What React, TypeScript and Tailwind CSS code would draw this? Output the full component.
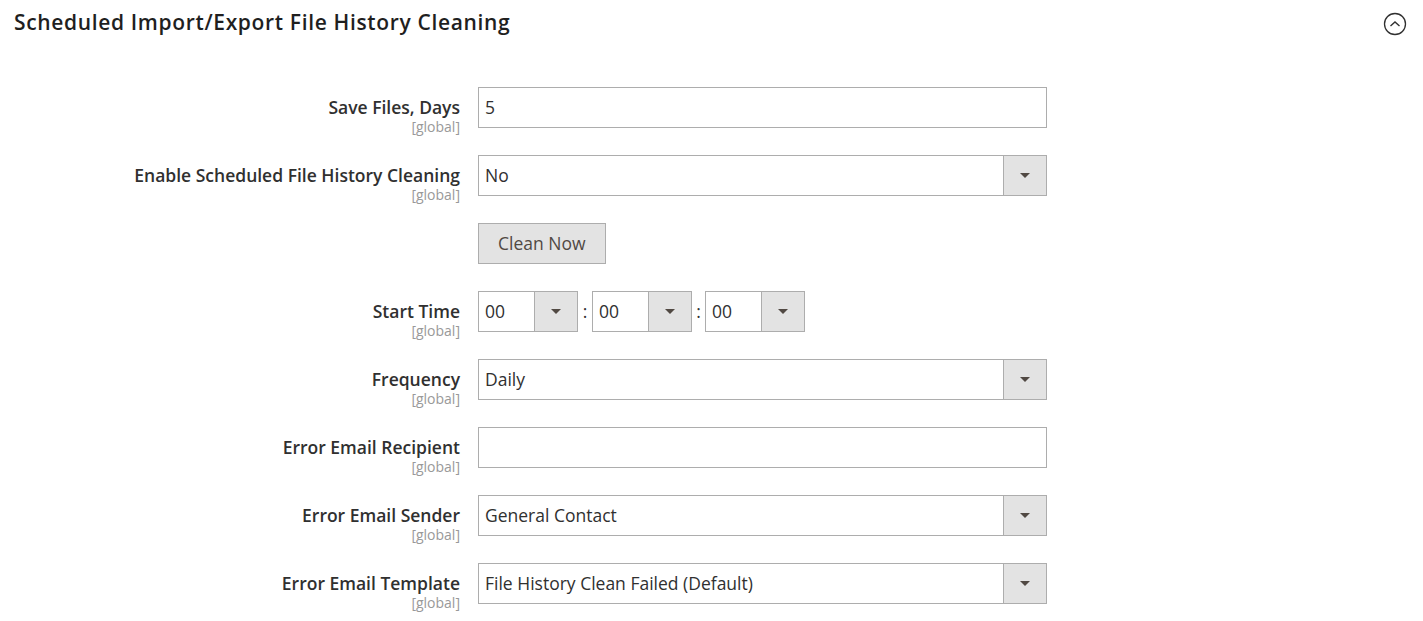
import React from "react";

const font = "font-['Open_Sans',_'Liberation_Sans',_sans-serif]";

function Arrow() {
  return (
    <div className="w-[43px] h-full bg-[#e3e3e3] border-l border-[#adadad] flex items-center justify-center shrink-0">
      <div className="w-0 h-0 border-l-[5px] border-r-[5px] border-t-[5px] border-l-transparent border-r-transparent border-t-[#514943]" />
    </div>
  );
}

function Select({ value, className = "" }: { value: string; className?: string }) {
  return (
    <div className={`h-[41px] border border-[#adadad] bg-white flex items-stretch ${className}`}>
      <div className="flex-1 flex items-center pl-[6px] text-[17.5px] text-[#303030]">{value}</div>
      <Arrow />
    </div>
  );
}

function Label({ text }: { text: string }) {
  return (
    <div className="w-[478px] shrink-0 pr-[18px] flex flex-col items-end pt-[10px]">
      <div className="text-[17.5px] leading-[20px] font-semibold text-[#303030]">{text}</div>
      <div className="text-[14px] leading-[20px] text-[#999999]">[global]</div>
    </div>
  );
}

function Row({ label, children }: { label: string; children: React.ReactNode }) {
  return (
    <div className="flex items-start h-[41px]">
      <Label text={label} />
      {children}
    </div>
  );
}

export default function App() {
  return (
    <div className={`w-[1423px] h-[621px] bg-white overflow-hidden ${font}`}>
      <div className="flex items-center justify-between h-[46px] pl-[14px] pr-[16px]">
        <h1 className="text-[21px] font-semibold text-[#1f1f1f] tracking-[0.65px]">
          Scheduled Import/Export File History Cleaning
        </h1>
        <svg width="24" height="24" viewBox="0 0 24 24" className="mt-[2px]">
          <circle cx="12" cy="12" r="10.5" fill="none" stroke="#303030" strokeWidth="1.3" />
          <path d="M7.5 14 L12 10 L16.5 14" fill="none" stroke="#303030" strokeWidth="1.4" />
        </svg>
      </div>
      <div className="flex flex-col gap-[27px] mt-[41px]">
        <Row label="Save Files, Days">
          <div className="w-[569px] h-[41px] border border-[#adadad] flex items-center pl-[6px] text-[17.5px] text-[#303030]">
            5
          </div>
        </Row>
        <Row label="Enable Scheduled File History Cleaning">
          <Select value="No" className="w-[569px]" />
        </Row>
        <div className="flex h-[41px]">
          <div className="w-[478px] shrink-0" />
          <button className="h-[41px] px-[19px] bg-[#e3e3e3] border border-[#adadad] text-[17.5px] text-[#514943]">
            Clean Now
          </button>
        </div>
        <Row label="Start Time">
          <div className="flex items-center">
            <Select value="00" className="w-[100px]" />
            <span className="w-[14px] text-center text-[17.5px] text-[#303030]">:</span>
            <Select value="00" className="w-[100px]" />
            <span className="w-[13px] text-center text-[17.5px] text-[#303030]">:</span>
            <Select value="00" className="w-[100px]" />
          </div>
        </Row>
        <Row label="Frequency">
          <Select value="Daily" className="w-[569px]" />
        </Row>
        <Row label="Error Email Recipient">
          <div className="w-[569px] h-[41px] border border-[#adadad]" />
        </Row>
        <Row label="Error Email Sender">
          <Select value="General Contact" className="w-[569px]" />
        </Row>
        <Row label="Error Email Template">
          <Select value="File History Clean Failed (Default)" className="w-[569px]" />
        </Row>
      </div>
    </div>
  );
}
